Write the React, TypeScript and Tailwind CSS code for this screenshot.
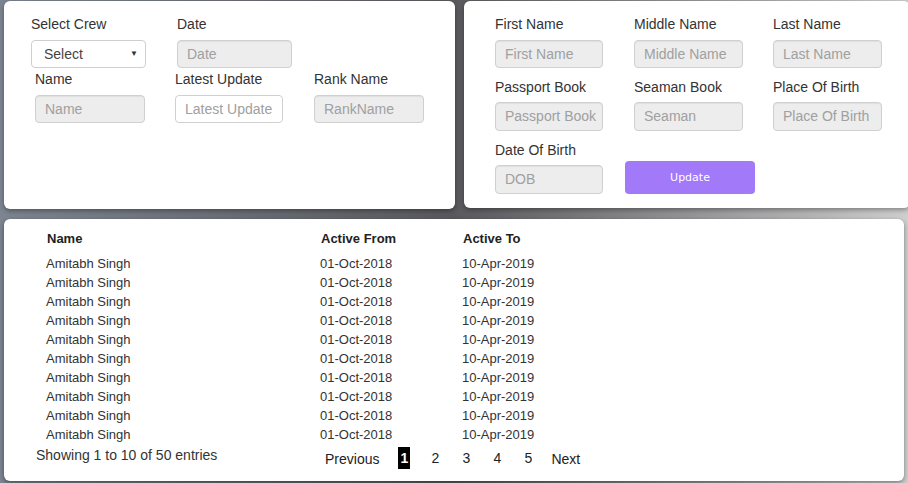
const font = "font-[family-name:'Liberation_Sans',Arial,sans-serif]";

type FieldProps = {
  label: string;
  placeholder: string;
  width: string;
  disabled?: boolean;
  height?: string;
  className?: string;
  labelGap?: string;
};

function Field({ label, placeholder, width, disabled = true, height = "h-[28px]", className = "", labelGap = "mt-[8px]" }: FieldProps) {
  return (
    <div className={`flex flex-col ${className}`}>
      <label className="text-[14px] leading-[16px] text-[#333] whitespace-nowrap">{label}</label>
      <div
        className={`${labelGap} ${width} ${height} flex items-center rounded-[4px] border border-[#d0d0d0] pl-[9px] text-[14px] text-[#a0a0a0] whitespace-nowrap overflow-hidden ${
          disabled ? "bg-[#ededed] shadow-[inset_0_1px_1px_rgba(0,0,0,0.06)]" : "bg-white"
        }`}
      >
        {placeholder}
      </div>
    </div>
  );
}

const rows = Array.from({ length: 10 }, () => ({
  name: "Amitabh Singh",
  from: "01-Oct-2018",
  to: "10-Apr-2019",
}));

export default function App() {
  return (
    <div
      className={`${font} w-[908px] h-[483px] overflow-hidden bg-linear-to-r from-[#7d8590] via-[#5a5a5e] to-[#cfcfcf] pt-[1px] pl-[4px]`}
    >
      <div className="flex gap-[9px]">
        {/* crew selection */}
        <div className="w-[451px] h-[208px] shrink-0 rounded-[6px] bg-white shadow-[0_2px_5px_rgba(0,0,0,0.35)] pt-[15px]">
          <div className="flex pl-[27px]">
            <div className="flex flex-col">
              <label className="text-[14px] leading-[16px] text-[#333]">Select Crew</label>
              <div className="mt-[8px] w-[115px] h-[28px] flex items-center justify-between rounded-[4px] border border-[#cfcfcf] bg-white pl-[12px] pr-[7px] text-[14px] text-[#444]">
                <span>Select</span>
                <span className="text-[8px] text-[#333]">▼</span>
              </div>
            </div>
            <Field label="Date" placeholder="Date" width="w-[115px]" className="ml-[31px]" />
          </div>
          <div className="flex pl-[31px] mt-[3px]">
            <Field label="Name" placeholder="Name" width="w-[110px]" />
            <Field label="Latest Update" placeholder="Latest Update" width="w-[108px]" disabled={false} className="ml-[30px]" />
            <Field label="Rank Name" placeholder="RankName" width="w-[110px]" className="ml-[31px]" />
          </div>
        </div>

        {/* personal details */}
        <div className="w-[446px] h-[207px] shrink-0 rounded-[6px] bg-white shadow-[0_2px_5px_rgba(0,0,0,0.35)] pt-[15px] pl-[31px]">
          <div className="flex">
            <Field label="First Name" placeholder="First Name" width="w-[108px]" />
            <Field label="Middle Name" placeholder="Middle Name" width="w-[109px]" className="ml-[31px]" />
            <Field label="Last Name" placeholder="Last Name" width="w-[109px]" className="ml-[30px]" />
          </div>
          <div className="flex mt-[11px]">
            <Field label="Passport Book" placeholder="Passport Book" width="w-[108px]" height="h-[29px]" labelGap="mt-[7px]" />
            <Field label="Seaman Book" placeholder="Seaman" width="w-[109px]" height="h-[29px]" labelGap="mt-[7px]" className="ml-[31px]" />
            <Field label="Place Of Birth" placeholder="Place Of Birth" width="w-[109px]" height="h-[29px]" labelGap="mt-[7px]" className="ml-[30px]" />
          </div>
          <div className="flex items-end mt-[11px]">
            <Field label="Date Of Birth" placeholder="DOB" width="w-[108px]" height="h-[29px]" labelGap="mt-[7px]" />
            <button className="ml-[22px] w-[130px] h-[33px] rounded-[4px] bg-[#a279f8] text-white text-[11px] font-[family-name:'DejaVu_Sans',sans-serif] pt-[1px]">
              Update
            </button>
          </div>
        </div>
      </div>

      {/* crew history */}
      <div className="mt-[10px] w-[900px] h-[262px] rounded-[6px] bg-white shadow-[0_2px_5px_rgba(0,0,0,0.4)] pt-[10px] text-[13px] leading-[19px] text-[#333]">
        <div className="pl-[42px]">
          <div className="grid grid-cols-[274px_142px_200px] font-bold text-[#222]">
            <div className="pl-[1px]">Name</div>
            <div className="pl-[1px]">Active From</div>
            <div className="pl-[1px]">Active To</div>
          </div>
          <div className="mt-[6px]">
            {rows.map((row, i) => (
              <div key={i} className="grid grid-cols-[274px_142px_200px]">
                <div>{row.name}</div>
                <div>{row.from}</div>
                <div>{row.to}</div>
              </div>
            ))}
          </div>
        </div>
        <div className="flex items-start mt-[2px] pl-[32px]">
          <div className="w-[289px] text-[14px]">Showing 1 to 10 of 50 entries</div>
          <div className="flex items-center gap-[19px] text-[14px] text-[#222] h-[22px] mt-[1px]">
            <span className="mt-[2px]">Previous</span>
            <span className="w-[12px] h-[22px] flex items-center justify-center bg-black text-white font-bold">1</span>
            {[2, 3, 4, 5].map((n) => (
              <span key={n} className="w-[12px] flex justify-center">{n}</span>
            ))}
            <span className="mt-[2px] -ml-[2px]">Next</span>
          </div>
        </div>
      </div>
    </div>
  );
}
